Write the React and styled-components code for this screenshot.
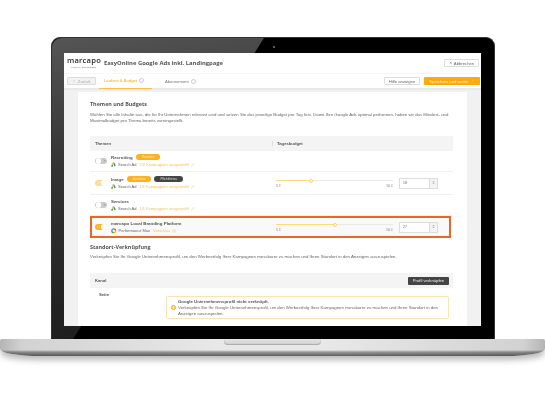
import React from 'react'
import styled, { createGlobalStyle } from 'styled-components'
import { ChevronLeft, ChevronRight, X, Pencil, Search, Check } from 'lucide-react'

const GlobalStyle = createGlobalStyle`
    html, body {
        margin: 0;
        padding: 0;
        background: #fff;
    }
    * {
        box-sizing: border-box;
    }
`;

const Page = styled.div`
    width: 545px;
    height: 409px;
    padding-top: 37px;
    overflow: hidden;
    background: #fff;
    font-family: "Liberation Sans", Arial, sans-serif;
    color: #444;
    filter: blur(0.45px);
`;

const Lid = styled.div`
    position: relative;
    width: 444px;
    height: 302px;
    margin-left: 51px;
    padding: 15px 13px 14px;
    background: #000;
    border-radius: 9px 9px 0 0;
    border: 1px solid #333;
    border-bottom: 0;

    &::before {
        content: '';
        position: absolute;
        inset: 0;
        border-radius: 9px 9px 0 0;
        background: linear-gradient(170deg, #555 0%, #333 35%, #161616 100%);
        clip-path: polygon(0 0, 212px 0, 21px 100%, 0 100%);
    }
`;

const Camera = styled.div`
    position: absolute;
    top: 8px;
    left: 221px;
    width: 2px;
    height: 2px;
    border-radius: 50%;
    background: #777;
`;

const Screen = styled.div`
    position: relative;
    width: 417px;
    height: 273px;
    margin-left: -1px;
    background: #f1f1f1;
    overflow: hidden;
    display: flex;
    flex-direction: column;
`;

const TitleBar = styled.div`
    height: 20px;
    flex: none;
    display: flex;
    align-items: center;
    padding: 0 2px;
    background: #fff;
`;

const Logo = styled.div`
    width: 36px;
    display: flex;
    flex-direction: column;
    align-items: center;
    line-height: 1;
`;

const LogoWord = styled.div`
    font-family: "Open Sans", sans-serif;
    font-size: 7.6px;
    font-weight: 600;
    letter-spacing: 0.25px;
    color: #2a2a2a;
    line-height: 7px;
`;

const LogoSub = styled.div`
    margin-top: 2px;
    font-size: 2.5px;
    line-height: 3px;
    font-weight: 700;
    letter-spacing: 0.15px;
    color: #e8601c;
`;

const PageTitle = styled.div`
    margin-left: 2px;
    font-family: "Open Sans", sans-serif;
    font-size: 5.85px;
    font-weight: 700;
    color: #555;
    flex: 1;
`;

const GhostButton = styled.div`
    height: 8px;
    display: flex;
    align-items: center;
    justify-content: center;
    gap: 1.5px;
    width: ${p => p.$w}px;
    margin-right: ${p => p.$mr || 0}px;
    font-size: 4.2px;
    color: ${p => p.$muted ? '#aaa' : '#666'};
    background: ${p => p.$muted ? '#f2f2f2' : '#fff'};
    border: 0.5px solid #ddd;
    border-radius: 1px;
`;

const TabBar = styled.div`
    height: 17px;
    flex: none;
    display: flex;
    align-items: center;
    padding: 0 1px 0 3px;
    background: #fff;
    border-top: 0.5px solid #f6f6f6;
    border-bottom: 2px solid #e9e9e9;
`;

const Tab = styled.div`
    height: 15px;
    width: ${p => p.$w}px;
    margin-left: ${p => p.$ml || 0}px;
    display: flex;
    align-items: center;
    gap: 2px;
    padding-left: ${p => p.$pl}px;
    font-size: 4.2px;
    color: ${p => p.$active ? '#f6a800' : '#777'};
    border-bottom: ${p => p.$active ? '1px solid #fbc04a' : '0'};
`;

const TabDot = styled.span`
    width: 5px;
    height: 5px;
    border-radius: 50%;
    border: 0.5px solid #ccc;
`;

const TabSpacer = styled.div`
    flex: 1;
`;

const SaveButton = styled.div`
    width: 56px;
    height: 8px;
    display: flex;
    align-items: center;
    justify-content: center;
    gap: 2px;
    font-size: 4.2px;
    white-space: nowrap;
    color: #fff3d0;
    background: #fdaa0c;
    border-radius: 1px;
`;

const Card = styled.div`
    flex: none;
    width: 389px;
    margin: 2px 0 0 14px;
    height: 240px;
    padding: 9px 14px 0 12px;
    background: #fff;
`;

const SectionTitle = styled.h2`
    margin: ${p => p.$mt || 0}px 0 0;
    font-family: "Open Sans", sans-serif;
    font-size: 5.4px;
    font-weight: 700;
    line-height: 7px;
    color: #555;
`;

const Intro = styled.p`
    margin: ${p => p.$mt}px 0 0;
    font-size: 4.33px;
    line-height: 6px;
    color: #666;
    width: 364px;
`;

const Table = styled.div`
    margin-top: ${p => p.$mt}px;
    width: 363px;
`;

const HeadRow = styled.div`
    height: 15px;
    display: grid;
    grid-template-columns: 182px 1fr;
    align-items: center;
    background: #f4f4f4;
    font-size: 4.2px;
    font-weight: 700;
    color: #555;
`;

const HeadCell = styled.div`
    padding-left: ${p => p.$pl}px;
    border-left: ${p => p.$divider ? '0.5px solid #ddd' : '0'};
`;

const Row = styled.div`
    height: ${p => p.$h}px;
    width: ${p => p.$highlight ? '361px' : '100%'};
    display: grid;
    grid-template-columns: ${p => p.$highlight ? '180px' : '182px'} 1fr;
    align-items: center;
    border: ${p => p.$highlight ? '2px solid #e8662a' : '0'};
    border-bottom: ${p => p.$highlight ? '2px solid #e8662a' : '0.5px solid #f0f0f0'};
    background: ${p => p.$highlight ? '#f9f9f9' : '#fff'};
`;

const ThemeCell = styled.div`
    display: flex;
    align-items: center;
    padding-left: ${p => p.$highlight ? 3 : 5}px;
`;

const Toggle = styled.div`
    position: relative;
    width: 12px;
    height: 6.5px;
    flex: none;
    display: flex;
    align-items: center;
    justify-content: ${p => p.$on ? 'flex-end' : 'flex-start'};
    padding: 0 0.5px;
    margin-right: 4px;
    border-radius: 4px;
    background: ${p => p.$on ? (p.$strong ? '#fbb423' : '#fddb94') : '#cdcdcd'};
`;

const Knob = styled.span`
    width: 5.5px;
    height: 5.5px;
    border-radius: 50%;
    background: #fff;
`;

const ToggleMark = styled.span`
    position: absolute;
    top: 1.5px;
    left: ${p => p.$on ? 1.5 : 7.5}px;
    display: flex;
    color: ${p => p.$on ? '#fff' : '#8a8a8a'};
`;

const ThemeText = styled.div`
    display: flex;
    flex-direction: column;
    gap: 1.5px;
`;

const NameLine = styled.div`
    display: flex;
    align-items: center;
    gap: 3px;
    height: 6px;
    font-size: 4.4px;
    font-weight: 700;
    color: #555;
`;

const Pill = styled.span`
    height: 6px;
    padding: 0 ${p => p.$pad}px;
    display: inline-flex;
    align-items: center;
    border-radius: 3px;
    font-size: 3px;
    font-weight: 400;
    color: ${p => p.$dark ? '#ddd' : '#fff3d0'};
    background: ${p => p.$dark ? '#444' : '#fdb022'};
`;

const SubLine = styled.div`
    display: flex;
    align-items: center;
    gap: 2px;
    height: 6px;
    font-size: 4px;
    color: #666;
`;

const OrangeText = styled.span`
    margin-left: 1px;
    color: #f9c15a;
`;

const BudgetCell = styled.div`
    display: flex;
    align-items: center;
    padding-left: 4px;
`;

const SliderWrap = styled.div`
    width: 117px;
    flex: none;
`;

const Track = styled.div`
    position: relative;
    height: 1px;
    margin-top: 2px;
    background: #e9e9e9;
`;

const Fill = styled.div`
    height: 100%;
    background: #fcdc7c;
`;

const Thumb = styled.span`
    position: absolute;
    top: -1.5px;
    width: 4px;
    height: 4px;
    margin-left: -2px;
    border-radius: 50%;
    background: #fff;
    border: 1px solid #fcd365;
`;

const SliderLabels = styled.div`
    display: flex;
    justify-content: space-between;
    margin-top: 3px;
    font-size: 3.4px;
    line-height: 4px;
    color: #777;
`;

const AmountBox = styled.div`
    width: 39px;
    height: 11px;
    margin-left: 6px;
    display: flex;
    border: 0.5px solid #ddd;
    background: #fff;
    font-size: 3.4px;
    color: #666;
`;

const AmountValue = styled.div`
    flex: 1;
    padding-left: 3px;
    line-height: 9px;
`;

const AmountUnit = styled.div`
    width: 8px;
    display: flex;
    align-items: center;
    justify-content: center;
    background: #f4f4f4;
    border-left: 0.5px solid #ddd;
`;

const DarkButton = styled.div`
    width: 41px;
    height: 8px;
    margin: 0 4px 0 auto;
    display: flex;
    align-items: center;
    justify-content: center;
    font-size: 4.2px;
    font-weight: 400;
    color: #eee;
    background: #444;
    border-radius: 1px;
`;

const KanalHead = styled.div`
    height: 15px;
    display: flex;
    align-items: center;
    padding-left: 5px;
    background: #f4f4f4;
    font-size: 4.2px;
    font-weight: 700;
    color: #555;
`;

const SiteRow = styled.div`
    display: flex;
    padding: 8px 4px 0 9px;
`;

const SiteLabel = styled.div`
    width: 67px;
    margin-top: -3.5px;
    font-size: 4.2px;
    font-weight: 700;
    line-height: 4px;
    color: #555;
`;

const Notice = styled.div`
    flex: 1;
    height: 23px;
    display: flex;
    align-items: center;
    gap: 2.5px;
    padding-left: 4px;
    border: 0.7px solid #fde3b4;
    border-radius: 1.5px;
    font-size: 4.33px;
    line-height: 6px;
    color: #666;
`;

const NoticeIcon = styled.span`
    width: 4.5px;
    height: 4.5px;
    flex: none;
    display: flex;
    align-items: center;
    justify-content: center;
    border-radius: 50%;
    background: #fdd27e;
    border: 0.5px solid #fbb423;
    font-size: 3px;
    font-weight: 700;
    color: #fff;
`;

const Strong = styled.div`
    font-weight: 700;
    color: #555;
`;

const Base = styled.div`
    position: relative;
    width: 545px;
    height: 17px;
    background: linear-gradient(to bottom, #00000000 0, #00000000 11px, #00000055 13px, #00000099 17px),
        linear-gradient(to right, #b4b4b4 0, #d2d2d2 4%, #e8e8e8 40%, #e8e8e8 60%, #d2d2d2 96%, #b4b4b4 100%);
    border-radius: 2px 2px 40px 40px / 2px 2px 7px 7px;
    box-shadow: 0 5px 6px -1px rgba(0, 0, 0, 0.28);
`;

const Notch = styled.div`
    position: absolute;
    top: 0;
    left: 224px;
    width: 97px;
    height: 6px;
    border-radius: 0 0 4px 4px;
    background: linear-gradient(to bottom, #e4e4e4, #d0d0d0);
    box-shadow: inset 0 -1px 1px #aaa;
`;

const AdsIcon = () => (
    <svg width="5" height="5" viewBox="0 0 10 10">
        <path d="M3.6 1 L6.4 1 L9.6 7 L7 9 Z" fill="#3b82d8" />
        <path d="M3.6 1 L6.4 2 L3.2 8.5 L1 7 Z" fill="#f9bc15" />
        <circle cx="2.2" cy="7.8" r="1.8" fill="#34a853" />
    </svg>
);

const PmaxIcon = () => (
    <svg width="5.5" height="5.5" viewBox="0 0 10 10" fill="none" strokeWidth="2.4">
        <path d="M5 1.5 A3.5 3.5 0 0 1 8.5 5" stroke="#ea4335" />
        <path d="M8.5 5 A3.5 3.5 0 0 1 5 8.5" stroke="#fbbc05" />
        <path d="M5 8.5 A3.5 3.5 0 0 1 1.5 5" stroke="#34a853" />
        <path d="M1.5 5 A3.5 3.5 0 0 1 5 1.5" stroke="#4285f4" />
    </svg>
);

const themes = [
    { name: 'Recruiting', h: 21, pills: [['Zwischen', false, 6]], sub: '2/2 Kampagnen ausgewählt' },
    { name: 'Image', h: 23, on: true, pills: [['Zwischen', false, 6], ['Pflichtthema', true, 6]], sub: '1/1 Kampagnen ausgewählt', value: 18, pct: 30 },
    { name: 'Services', h: 21, sub: '1/1 Kampagnen ausgewählt' },
    { name: 'marcapo Local Branding Platform', h: 22, on: true, highlight: true, pmax: true, value: 27, pct: 50 },
]

export default function App() {
    return (
        <Page>
            <GlobalStyle />
            <Lid>
                <Camera />
                <Screen>
                    <TitleBar>
                        <Logo>
                            <LogoWord>marcapo</LogoWord>
                            <LogoSub>LOCAL BRANDING</LogoSub>
                        </Logo>
                        <PageTitle>EasyOnline Google Ads inkl. Landingpage</PageTitle>
                        <GhostButton $w={35}><X size={3.5} strokeWidth={3} />Abbrechen</GhostButton>
                    </TitleBar>
                    <TabBar>
                        <GhostButton $w={29} $muted><ChevronLeft size={4} />Zurück</GhostButton>
                        <Tab $w={53} $pl={5} $ml={3} $active>Laufzeit &amp; Budget<TabDot /></Tab>
                        <Tab $w={60} $pl={13}>Abonnement<TabDot /></Tab>
                        <TabSpacer />
                        <GhostButton $w={36} $mr={4}>Hilfe anzeigen</GhostButton>
                        <SaveButton>Speichern und weiter<ChevronRight size={4} /></SaveButton>
                    </TabBar>
                    <Card>
                        <SectionTitle>Themen und Budgets</SectionTitle>
                        <Intro $mt={4}>
                            Wählen Sie alle Inhalte aus, die für Ihr Unternehmen relevant sind und setzen Sie das jeweilige Budget pro Tag fest. Damit Ihre Google Ads optimal performen, haben wir das Mindest- und Maximalbudget pro Thema bereits voreingestellt.
                        </Intro>
                        <Table $mt={12}>
                            <HeadRow>
                                <HeadCell $pl={5}>Themen</HeadCell>
                                <HeadCell $pl={4} $divider>Tagesbudget</HeadCell>
                            </HeadRow>
                            {themes.map(t => (
                                <Row key={t.name} $h={t.h} $highlight={t.highlight}>
                                    <ThemeCell $highlight={t.highlight}>
                                        <Toggle $on={t.on} $strong={t.highlight}>
                                            <Knob />
                                            <ToggleMark $on={t.on}>
                                                {t.on ? <Check size={3.5} strokeWidth={3} /> : <X size={3.5} strokeWidth={3} />}
                                            </ToggleMark>
                                        </Toggle>
                                        <ThemeText>
                                            <NameLine>
                                                {t.name}
                                                {t.pills && t.pills.map(([label, dark, pad]) => (
                                                    <Pill key={label} $dark={dark} $pad={pad}>{label}</Pill>
                                                ))}
                                            </NameLine>
                                            {t.pmax ? (
                                                <SubLine>
                                                    <PmaxIcon />Performance Max
                                                    <OrangeText>Vorschau</OrangeText>
                                                    <Search size={4} color="#f9c15a" />
                                                </SubLine>
                                            ) : (
                                                <SubLine>
                                                    <AdsIcon />Search Ad
                                                    <OrangeText>{t.sub}</OrangeText>
                                                    <Pencil size={3.5} color="#f9c15a" />
                                                </SubLine>
                                            )}
                                        </ThemeText>
                                    </ThemeCell>
                                    {t.value && (
                                        <BudgetCell>
                                            <SliderWrap>
                                                <Track>
                                                    <Fill style={{ width: `${t.pct}%` }} />
                                                    <Thumb style={{ left: `${t.pct}%` }} />
                                                </Track>
                                                <SliderLabels><span>5 €</span><span>50 €</span></SliderLabels>
                                            </SliderWrap>
                                            <AmountBox>
                                                <AmountValue>{t.value}</AmountValue>
                                                <AmountUnit>€</AmountUnit>
                                            </AmountBox>
                                        </BudgetCell>
                                    )}
                                </Row>
                            ))}
                        </Table>
                        <SectionTitle $mt={6}>Standort-Verknüpfung</SectionTitle>
                        <Intro $mt={3}>
                            Verknüpfen Sie Ihr Google Unternehmensprofil, um den Werbeerfolg Ihrer Kampagnen messbarer zu machen und Ihren Standort in den Anzeigen auszuspielen.
                        </Intro>
                        <Table $mt={13}>
                            <KanalHead>
                                Kanal
                                <DarkButton>Profil verknüpfen</DarkButton>
                            </KanalHead>
                            <SiteRow>
                                <SiteLabel>Seite</SiteLabel>
                                <Notice>
                                    <NoticeIcon>!</NoticeIcon>
                                    <div>
                                        <Strong>Google Unternehmensprofil nicht verknüpft.</Strong>
                                        Verknüpfen Sie Ihr Google Unternehmensprofil, um den Werbeerfolg Ihrer Kampagnen messbarer zu machen und Ihren Standort in den Anzeigen auszuspielen.
                                    </div>
                                </Notice>
                            </SiteRow>
                        </Table>
                    </Card>
                </Screen>
            </Lid>
            <Base>
                <Notch />
            </Base>
        </Page>
    )
}
